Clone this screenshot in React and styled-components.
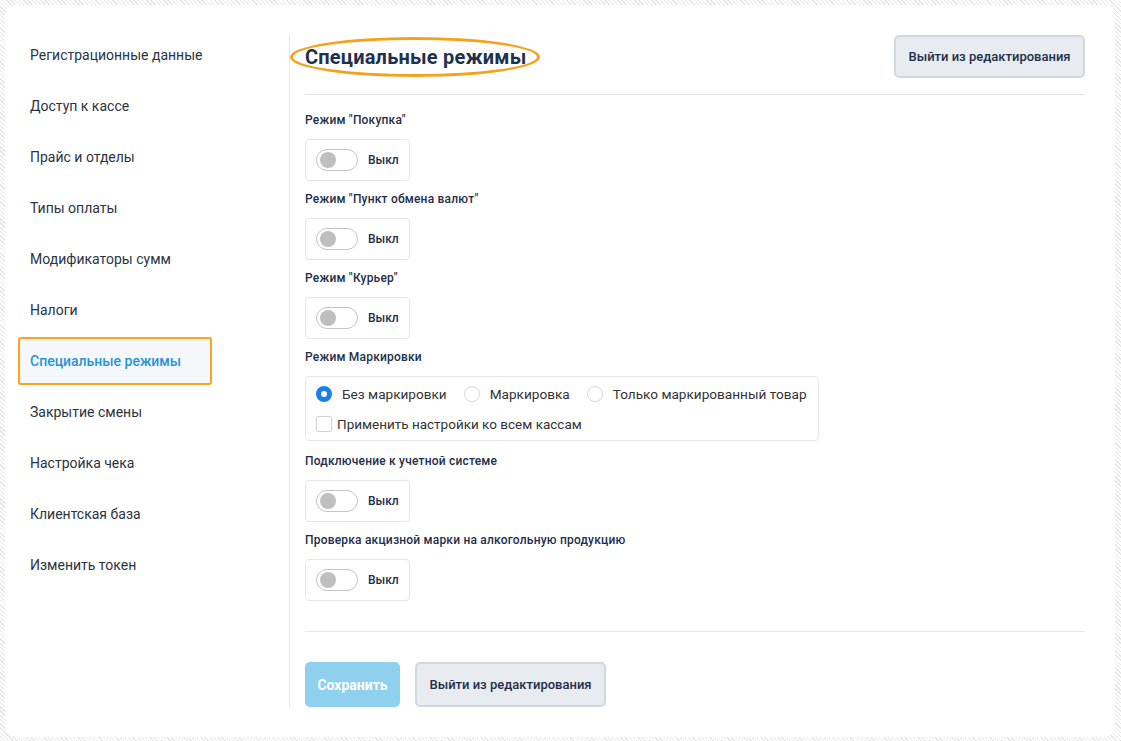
import React, { useState } from 'react';
import styled, { createGlobalStyle } from 'styled-components';

const GlobalStyle = createGlobalStyle`
  html, body {
    margin: 0;
    padding: 0;
  }
  body {
    font-family: Roboto, "Noto Sans", Arial, sans-serif;
    background: repeating-linear-gradient(
      45deg,
      #e6e6e6 0px,
      #e6e6e6 1px,
      #ffffff 1px,
      #ffffff 3px
    );
    min-height: 741px;
  }
`;

const Page = styled.div`
  padding: 5px 6px 4px 5px;
`;

const Card = styled.div`
  display: flex;
  box-sizing: border-box;
  height: 732px;
  background: #fff;
  border-radius: 10px;
  padding: 26px 30px 29px 13px;
`;

const Sidebar = styled.nav`
  width: 271px;
  flex-shrink: 0;
  display: flex;
  flex-direction: column;
  gap: 3px;
`;

const NavItem = styled.div`
  box-sizing: border-box;
  width: 194px;
  height: 48px;
  display: flex;
  align-items: center;
  padding-left: 10px;
  font-size: 14px;
  color: ${(p) => (p.active ? '#2a92d6' : '#2b3440')};
  font-weight: ${(p) => (p.active ? 500 : 400)};
  background: ${(p) => (p.active ? '#f4f8fb' : 'transparent')};
  border: 2px solid ${(p) => (p.active ? '#fba31b' : 'transparent')};
  border-radius: 3px;
  cursor: pointer;
`;

const Main = styled.main`
  flex: 1;
  margin-top: 4px;
  border-left: 1px solid #e8e8e8;
  padding-left: 15px;
  display: flex;
  flex-direction: column;
`;

const Header = styled.div`
  display: flex;
  justify-content: space-between;
  align-items: center;
  height: 43px;
`;

const TitleWrap = styled.div`
  position: relative;
`;

const Title = styled.h1`
  margin: 0;
  font-size: 20px;
  line-height: 24px;
  font-weight: 700;
  color: #1d324d;
  letter-spacing: 0.2px;
`;

const TitleMark = styled.span`
  position: absolute;
  left: -15px;
  top: -8px;
  width: 250px;
  height: 40px;
  box-sizing: border-box;
  border: 3px solid #f6a11c;
  border-radius: 50%;
  pointer-events: none;
`;

const GrayButton = styled.button`
  box-sizing: border-box;
  width: 191px;
  height: ${(p) => p.h || 43}px;
  background: #e8ebef;
  border: 2px solid #d3d8de;
  border-radius: 5px;
  font-family: inherit;
  font-size: 13px;
  font-weight: 500;
  color: #1d2f4a;
  cursor: pointer;
`;

const Rule = styled.hr`
  border: none;
  border-top: 1px solid #e6e6e6;
  margin: ${(p) => p.m};
`;

const Section = styled.div`
  display: flex;
  flex-direction: column;
  align-items: flex-start;
  margin-bottom: ${(p) => p.mb || 10}px;
`;

const Label = styled.div`
  font-size: 12px;
  line-height: 16px;
  font-weight: 500;
  letter-spacing: 0.2px;
  color: #1d2f4a;
  margin-bottom: 11px;
`;

const ToggleBox = styled.div`
  box-sizing: border-box;
  width: 105px;
  height: 42px;
  border: 1px solid #e6e6e6;
  border-radius: 4px;
  display: flex;
  align-items: center;
  padding-left: 10px;
  gap: 10px;
`;

const Switch = styled.div`
  box-sizing: border-box;
  width: 42px;
  height: 22px;
  border: 1px solid #c4c4c4;
  border-radius: 11px;
  background: ${(p) => (p.on ? '#2a92d6' : '#fff')};
  display: flex;
  align-items: center;
  padding: 0 3px;
  justify-content: ${(p) => (p.on ? 'flex-end' : 'flex-start')};
  cursor: pointer;
`;

const Knob = styled.span`
  width: 16px;
  height: 16px;
  border-radius: 50%;
  background: ${(p) => (p.on ? '#fff' : '#bfbfbf')};
`;

const ToggleText = styled.span`
  font-size: 12px;
  font-weight: 500;
  color: #1d2f4a;
`;

const GroupBox = styled.div`
  box-sizing: border-box;
  width: 514px;
  height: 65px;
  border: 1px solid #e6e6e6;
  border-radius: 4px;
  padding: 8px 10px 0 10px;
  display: flex;
  flex-direction: column;
  gap: 12px;
`;

const RadioRow = styled.div`
  display: flex;
  align-items: center;
  height: 18px;
`;

const RadioItem = styled.label`
  display: flex;
  align-items: center;
  flex-shrink: 0;
  white-space: nowrap;
  margin-right: 17px;
  font-size: 13.6px;
  color: #333;
  cursor: pointer;
`;

const RadioCircle = styled.span`
  box-sizing: border-box;
  flex-shrink: 0;
  width: 16px;
  height: 16px;
  border-radius: 50%;
  margin-right: 10px;
  border: ${(p) => (p.checked ? '5px solid #1a7fe8' : '1px solid #d9d9d9')};
  background: #fff;
`;

const CheckRow = styled.label`
  display: flex;
  align-items: center;
  white-space: nowrap;
  font-size: 13.5px;
  color: #333;
  height: 18px;
  cursor: pointer;
`;

const CheckSquare = styled.span`
  box-sizing: border-box;
  width: 16px;
  height: 16px;
  border: 1px solid #d4d4d4;
  border-radius: 2px;
  margin-right: 5px;
  background: #fff;
`;

const Footer = styled.div`
  display: flex;
  gap: 15px;
`;

const SaveButton = styled.button`
  box-sizing: border-box;
  width: 95px;
  height: 45px;
  background: #8ed0ee;
  border: none;
  border-radius: 5px;
  font-family: inherit;
  font-size: 14px;
  font-weight: 700;
  color: #fff;
  cursor: default;
`;

const menu = [
  'Регистрационные данные',
  'Доступ к кассе',
  'Прайс и отделы',
  'Типы оплаты',
  'Модификаторы сумм',
  'Налоги',
  'Специальные режимы',
  'Закрытие смены',
  'Настройка чека',
  'Клиентская база',
  'Изменить токен',
];

function Toggle() {
  const [on, setOn] = useState(false);
  return (
    <ToggleBox>
      <Switch on={on ? 1 : 0} onClick={() => setOn(!on)}>
        <Knob on={on ? 1 : 0} />
      </Switch>
      <ToggleText>{on ? 'Вкл' : 'Выкл'}</ToggleText>
    </ToggleBox>
  );
}

function ToggleSection({ label }) {
  return (
    <Section>
      <Label>{label}</Label>
      <Toggle />
    </Section>
  );
}

export default function App() {
  const [mode, setMode] = useState(0);
  const modes = ['Без маркировки', 'Маркировка', 'Только маркированный товар'];

  return (
    <Page>
      <GlobalStyle />
      <Card>
        <Sidebar>
          {menu.map((m) => (
            <NavItem key={m} active={m === 'Специальные режимы' ? 1 : 0}>{m}</NavItem>
          ))}
        </Sidebar>
        <Main>
          <Header>
            <TitleWrap>
              <Title>Специальные режимы</Title>
              <TitleMark />
            </TitleWrap>
            <GrayButton>Выйти из редактирования</GrayButton>
          </Header>
          <Rule m="16px 0 17px 0" />
          <ToggleSection label={'Режим "Покупка"'} />
          <ToggleSection label={'Режим "Пункт обмена валют"'} />
          <ToggleSection label={'Режим "Курьер"'} />
          <Section mb={12}>
            <Label>Режим Маркировки</Label>
            <GroupBox>
              <RadioRow>
                {modes.map((t, i) => (
                  <RadioItem key={t} onClick={() => setMode(i)}>
                    <RadioCircle checked={mode === i} />
                    {t}
                  </RadioItem>
                ))}
              </RadioRow>
              <CheckRow>
                <CheckSquare />
                Применить настройки ко всем кассам
              </CheckRow>
            </GroupBox>
          </Section>
          <ToggleSection label="Подключение к учетной системе" />
          <ToggleSection label="Проверка акцизной марки на алкогольную продукцию" />
          <Rule m="20px 0 30px 0" />
          <Footer>
            <SaveButton>Сохранить</SaveButton>
            <GrayButton h={45}>Выйти из редактирования</GrayButton>
          </Footer>
        </Main>
      </Card>
    </Page>
  );
}
